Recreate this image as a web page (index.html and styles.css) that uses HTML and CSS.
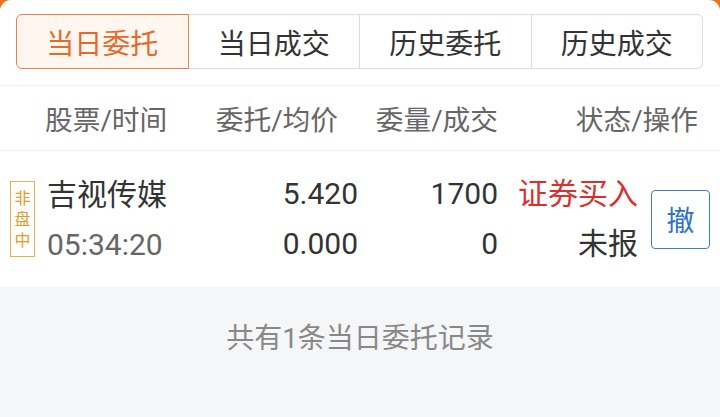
FILE: index.html
```html
<!DOCTYPE html>
<html>
  <head>
    <meta charset="utf-8">
    <link rel="stylesheet" href="styles.css">
  </head>
  <body>
    <div class="page">
      <div class="tabs-wrap">
        <div class="tabs">
          <div class="tab active">当日委托</div>
          <div class="tab">当日成交</div>
          <div class="tab">历史委托</div>
          <div class="tab">历史成交</div>
        </div>
      </div>
      <div class="head">
        <div class="h-name">股票/时间</div>
        <div class="h-price">委托/均价</div>
        <div class="h-qty">委量/成交</div>
        <div class="h-state">状态/操作</div>
      </div>
      <div class="order">
        <div class="badge"><span>非盘中</span></div>
        <div class="c-name">
          <div class="name">吉视传媒</div>
          <div class="time">05:34:20</div>
        </div>
        <div class="c-num">
          <div>5.420</div>
          <div>0.000</div>
        </div>
        <div class="c-qty">
          <div>1700</div>
          <div>0</div>
        </div>
        <div class="c-state">
          <div class="buy">证券买入</div>
          <div>未报</div>
        </div>
        <button class="cancel">撤</button>
      </div>
      <div class="footer">共有1条当日委托记录</div>
    </div>
  </body>
</html>
```
FILE: styles.css
```css
html,
body {
  margin: 0;
  height: 100%;
}
body {
  background: #f0701f;
  font-family: Roboto, "Noto Sans CJK SC", sans-serif;
  color: #333;
}
.page {
  display: flex;
  flex-direction: column;
  height: 100vh;
  background: #fff;
  border-radius: 11px 11px 0 0;
  overflow: hidden;
}
.tabs-wrap {
  padding: 14px 17px 16px 16px;
  border-bottom: 1px solid #f2f2f2;
}
.tabs {
  display: flex;
  height: 55px;
}
.tab {
  flex: 1;
  display: flex;
  align-items: center;
  justify-content: center;
  font-size: 28px;
  color: #333;
  border: 1px solid #dcdcdc;
  border-left: none;
  box-sizing: border-box;
}
.tab:first-child {
  border-left: 1px solid #dcdcdc;
  border-radius: 6px 0 0 6px;
}
.tab:last-child {
  border-radius: 0 6px 6px 0;
}
.tab.active {
  color: #e5692a;
  background: #fff6ef;
  border-color: #e4824a;
}
.head {
  display: flex;
  align-items: center;
  height: 64px;
  padding: 0 22px 0 45px;
  font-size: 27.7px;
  color: #666;
  border-bottom: 1px solid #f2f2f2;
}
.h-name {
  width: 133px;
}
.h-price,
.h-qty {
  width: 160px;
  text-align: right;
}
.h-state {
  flex: 1;
  text-align: right;
}
.order {
  display: flex;
  align-items: center;
  height: 136px;
  padding: 0 10px;
  font-size: 30px;
  line-height: 50px;
}
.badge {
  box-sizing: border-box;
  width: 25px;
  height: 76px;
  display: flex;
  align-items: center;
  justify-content: center;
  border: 1px solid #e8b14f;
  color: #e39b2b;
  font-size: 16px;
  line-height: 21px;
  margin-right: 12px;
}
.badge span {
  width: 16px;
}
.c-name {
  width: 151px;
}
.name {
  padding-top: 2px;
}
.time {
  color: #666;
}
.c-num {
  width: 160px;
  text-align: right;
}
.c-qty {
  width: 140px;
  text-align: right;
}
.c-state {
  width: 140px;
  text-align: right;
}
.buy {
  color: #d7302d;
}
.cancel {
  width: 59px;
  height: 59px;
  margin-left: 13px;
  padding: 0;
  background: #fff;
  border: 1.5px solid #3b7ecb;
  border-radius: 4px;
  color: #2f72c3;
  font-family: inherit;
  font-size: 28px;
}
.footer {
  flex: 1;
  background: #f5f6f8;
  text-align: center;
  padding-top: 34px;
  line-height: 36px;
  font-size: 28px;
  color: #888;
}
```
